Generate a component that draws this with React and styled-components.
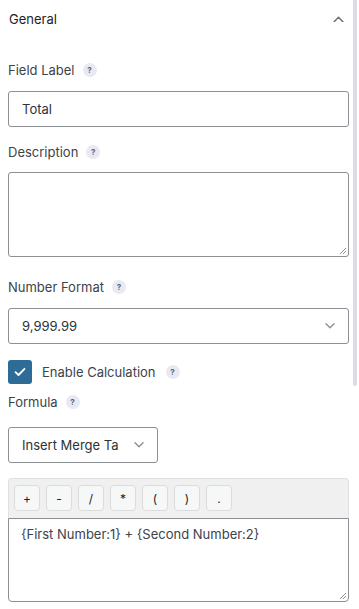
import React from 'react';
import styled, { createGlobalStyle } from 'styled-components';

const Global = createGlobalStyle`
  html, body {
    margin: 0;
    padding: 0;
    background: #fff;
    font-family: Inter, "Noto Sans", sans-serif;
    color: #3c434a;
  }
`;

const Page = styled.div`
  position: relative;
  width: 359px;
  height: 609px;
  overflow: hidden;
  background: #fff;
`;

const Thumb = styled.div`
  position: absolute;
  top: 0;
  right: 2px;
  width: 4px;
  height: 386px;
  background: #dcdce8;
  border-radius: 0 0 2px 2px;
`;

const Panel = styled.div`
  width: 341px;
  padding-left: 8px;
`;

const Header = styled.div`
  display: flex;
  align-items: center;
  justify-content: space-between;
  height: 38px;
  padding-left: 1px;
  padding-right: 5px;
  font-size: 13px;
  color: #1d2327;
`;

const Label = styled.div`
  display: flex;
  align-items: center;
  gap: 8px;
  height: 20px;
  margin-top: ${p => p.$top}px;
  margin-bottom: ${p => p.$bottom}px;
  font-size: 13px;
  color: #3c434a;
`;

const Help = styled.span`
  display: inline-flex;
  align-items: center;
  justify-content: center;
  width: 14px;
  height: 14px;
  border-radius: 50%;
  background: #e9e9f3;
  color: #5b5e7a;
  font-size: 8px;
  font-weight: 700;
`;

const Input = styled.div`
  box-sizing: border-box;
  display: flex;
  align-items: center;
  height: 36px;
  width: ${p => p.$width || 341}px;
  padding: 0 13px;
  border: 1px solid #8c8f94;
  border-radius: 3px;
  font-size: 13px;
  color: #2c3338;
  justify-content: space-between;
`;

const TextArea = styled.div`
  position: relative;
  box-sizing: border-box;
  height: ${p => p.$height}px;
  border: 1px solid #8c8f94;
  border-radius: ${p => p.$radius || '3px'};
  padding: 7px 12px;
  font-size: 13px;
  color: #3c434a;
`;

const Grip = styled.svg`
  position: absolute;
  right: 1px;
  bottom: 1px;
`;

const CheckRow = styled.div`
  display: flex;
  align-items: center;
  gap: 10px;
  margin-top: 16px;
  height: 24px;
  font-size: 13px;
  color: #3c434a;
`;

const Box = styled.span`
  display: inline-flex;
  align-items: center;
  justify-content: center;
  width: 24px;
  height: 24px;
  border-radius: 3px;
  background: #2e6c97;
`;

const Formula = styled.div`
  margin-top: 15px;
`;

const Toolbar = styled.div`
  display: flex;
  gap: 6px;
  height: 40px;
  box-sizing: border-box;
  padding: 6px 5px 0;
  background: #f0f0f1;
  border: 1px solid #e0e0e2;
  border-bottom: none;
  border-radius: 4px 4px 0 0;
`;

const OpButton = styled.span`
  box-sizing: border-box;
  display: inline-flex;
  align-items: center;
  justify-content: center;
  width: 26px;
  height: 26px;
  border: 1px solid #dcdcde;
  border-radius: 4px;
  background: #f6f7f7;
  font-size: 12px;
  color: #1d2327;
`;

const Chevron = ({ up, color = '#8c8f94', size = 10 }) => (
  <svg width={size} height={size * 0.6} viewBox="0 0 10 6" fill="none">
    <path
      d={up ? 'M1 5.2L5 1.2L9 5.2' : 'M1 0.8L5 4.8L9 0.8'}
      stroke={color}
      strokeWidth="1.4"
      strokeLinecap="round"
      strokeLinejoin="round"
    />
  </svg>
);

const ResizeGrip = () => (
  <Grip width="9" height="9" viewBox="0 0 9 9">
    <path d="M8 2L2 8M8 5L5 8" stroke="#8c8f94" strokeWidth="1" />
  </Grip>
);

const ops = ['+', '-', '/', '*', '(', ')', '.'];

const App = () => (
  <Page>
    <Global />
    <Panel>
      <Header>
        General
        <Chevron up color="#6d7178" size={11} />
      </Header>

      <Label $top={22} $bottom={11}>
        Field Label <Help>?</Help>
      </Label>
      <Input>Total</Input>

      <Label $top={15} $bottom={10}>
        Description <Help>?</Help>
      </Label>
      <TextArea $height={85}>
        <ResizeGrip />
      </TextArea>

      <Label $top={20} $bottom={11}>
        Number Format <Help>?</Help>
      </Label>
      <Input>
        9,999.99
        <Chevron />
      </Input>

      <CheckRow>
        <Box>
          <svg width="12" height="10" viewBox="0 0 12 10" fill="none">
            <path d="M1.5 5.2L4.5 8L10.5 1.8" stroke="#fff" strokeWidth="1.8" strokeLinecap="round" strokeLinejoin="round" />
          </svg>
        </Box>
        Enable Calculation <Help>?</Help>
      </CheckRow>

      <Label $top={8} $bottom={15}>
        Formula <Help>?</Help>
      </Label>
      <Input $width={150}>
        Insert Merge Ta
        <Chevron />
      </Input>

      <Formula>
        <Toolbar>
          {ops.map(op => (
            <OpButton key={op}>{op}</OpButton>
          ))}
        </Toolbar>
        <TextArea $height={84} $radius="0 0 4px 4px">
          {'{First Number:1} + {Second Number:2}'}
          <ResizeGrip />
        </TextArea>
      </Formula>
    </Panel>
    <Thumb />
  </Page>
);

export default App;
